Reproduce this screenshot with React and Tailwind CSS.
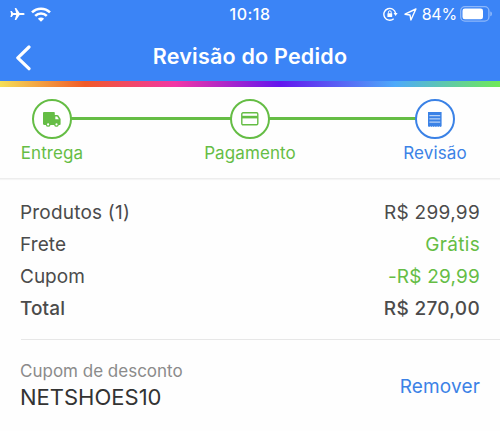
import React from "react";

const steps = [
  { label: "Entrega", icon: TruckIcon, tone: "text-[#65bd45]", width: "w-[62px]" },
  { label: "Pagamento", icon: CardIcon, tone: "text-[#65bd45]", width: "ml-[121px] w-[92px]" },
  { label: "Revisão", icon: ReceiptIcon, tone: "text-[#3b82e6]", width: "ml-[108px] w-[62px]" },
];

const rows = [
  { label: "Produtos (1)", value: "R$ 299,99", tone: "text-[#4b4b4b]", weight: "font-normal", ls: "tracking-[0.2px]", vs: "tracking-[0.3px]" },
  { label: "Frete", value: "Grátis", tone: "text-[#65bd45]", weight: "font-normal", ls: "tracking-[0.1px]", vs: "tracking-[0.3px]" },
  { label: "Cupom", value: "-R$ 29,99", tone: "text-[#65bd45]", weight: "font-normal", ls: "tracking-[0px]", vs: "tracking-[0.2px]" },
  { label: "Total", value: "R$ 270,00", tone: "text-[#4b4b4b]", weight: "font-medium", ls: "tracking-[0.1px]", vs: "tracking-[0.3px]" },
];

function PlaneIcon() {
  return (
    <svg className="block" width="15" height="14" viewBox="0 0 15 14" fill="white">
      <path d="M14.7 7c0 .6-.9 1.1-2 1.1H9.6L6.2 13H4.7l1.5-4.9H3.2l-1.5 2H.4l.7-3.1-.7-3.1h1.3l1.5 2h3L4.7 1h1.5l3.4 4.9h3.1c1.1 0 2 .5 2 1.1z" />
    </svg>
  );
}

function WifiIcon() {
  return (
    <svg className="block" width="20" height="15" viewBox="0 0 20 15" fill="none" stroke="white" strokeWidth="2.5">
      <path d="M1 5.4a12.7 12.7 0 0 1 18 0" />
      <path d="M4.2 8.9a8.1 8.1 0 0 1 11.6 0" />
      <path d="M10 14.8 6.9 11.8a4.4 4.4 0 0 1 6.2 0z" fill="white" stroke="none" />
    </svg>
  );
}

function LockIcon() {
  return (
    <svg className="block" width="15" height="14" viewBox="0 0 15 14" fill="none" stroke="white" strokeWidth="1.4">
      <path d="M10.7 11.7A5.9 5.9 0 1 1 12.6 6.4" />
      <path d="M10.6 6.1h4l-2 2.9z" fill="white" stroke="none" />
      <rect x="4.4" y="6.3" width="4.8" height="3.8" rx=".5" fill="white" stroke="none" />
      <path d="M5.4 6.6V5.2a1.4 1.4 0 0 1 2.8 0v1.4" strokeWidth="1" />
    </svg>
  );
}

function LocationIcon() {
  return (
    <svg className="block" width="13" height="13" viewBox="0 0 13 13" fill="none" stroke="white" strokeWidth="1.4" strokeLinejoin="round">
      <path d="M11.9 1 1 6.2l5 .8.9 5z" />
    </svg>
  );
}

function BatteryIcon() {
  return (
    <svg className="block" width="33" height="16" viewBox="0 0 33 16">
      <rect x=".7" y=".7" width="28.2" height="14.4" rx="4.2" fill="none" stroke="white" strokeOpacity=".42" strokeWidth="1.3" />
      <rect x="2.5" y="2.5" width="20.5" height="10.8" rx="2.3" fill="white" />
      <path d="M30.3 5.6c1 .3 1.6 1.2 1.6 2.3s-.6 2-1.6 2.3z" fill="white" fillOpacity=".45" />
    </svg>
  );
}

function TruckIcon() {
  return (
    <svg className="block" width="18" height="15" viewBox="0 0 18 15">
      <path fill="currentColor" d="M1.2 0h9.6c.6 0 1 .4 1 1v2h2.4c.5 0 .9.2 1.2.6l1.9 2.9c.2.2.3.5.3.8V12c0 .5-.3.9-.8.9h-1a2.4 2.4 0 0 1-4.7 0H7.5a2.4 2.4 0 0 1-4.7 0H1.2c-.7 0-1.2-.5-1.2-1.1V1.2C0 .5.5 0 1.2 0z" />
      <path fill="white" d="M12.3 4.4h1.8l1.8 2.9h-3.6z" />
      <circle cx="5.1" cy="12.4" r="1.1" fill="white" />
      <circle cx="13.5" cy="12.4" r="1.1" fill="white" />
    </svg>
  );
}

function CardIcon() {
  return (
    <svg className="block" width="18" height="14" viewBox="0 0 18 14">
      <rect x=".8" y=".8" width="16" height="12" rx="1.2" fill="none" stroke="currentColor" strokeWidth="1.4" />
      <path fill="currentColor" d="M1 3.8h15.8v2.6H1z" />
    </svg>
  );
}

function ReceiptIcon() {
  return (
    <svg className="block" width="14" height="15" viewBox="0 0 14 15">
      <path fill="currentColor" d="M0 0h13.6v14.2l-1.1.7-1.2-.7-1.1.7-1.1-.7-1.2.7-1.1-.7-1.1.7-1.2-.7-1.1.7-1.1-.7-1.2.7-1.1-.7z" />
      <path stroke="white" strokeOpacity=".8" strokeWidth="1" d="M1.4 3.7h10.8M1.4 6.9h10.8M1.4 10.1h10.8" />
    </svg>
  );
}

function Step({ label, icon: Icon, tone, width }) {
  return (
    <div className={`flex flex-col items-center ${width} ${tone}`}>
      <div className="flex size-10 items-center justify-center rounded-full border-2 border-current bg-white">
        <Icon />
      </div>
      <span className="mt-[2px] text-[17px] leading-6 tracking-[0.1px] whitespace-nowrap">{label}</span>
    </div>
  );
}

export default function App() {
  return (
    <div className="h-[431px] w-[500px] overflow-hidden bg-[#fefefe] font-['Inter','Liberation_Sans',sans-serif]">
      <header className="h-[81px] bg-[#3b84f6] text-white">
        <div className="grid h-7 grid-cols-[1fr_60px_1fr] items-center pr-[7px] pl-[10px]">
          <div className="flex items-center gap-[6px]">
            <PlaneIcon />
            <WifiIcon />
          </div>
          <span className="mr-[3px] text-center text-[16px] font-medium tracking-[0.5px] whitespace-nowrap">10:18</span>
          <div className="flex items-center justify-end">
            <LockIcon />
            <span className="ml-[6px]"><LocationIcon /></span>
            <span className="ml-[5px] text-[16px] tracking-[-0.2px]">84%</span>
            <span className="ml-[3px]"><BatteryIcon /></span>
          </div>
        </div>
        <div className="grid h-[58px] grid-cols-[40px_1fr_40px] items-center">
          <svg className="ml-[14px] block" width="17" height="27" viewBox="0 0 17 27" fill="none" stroke="white" strokeWidth="3.2" strokeLinecap="round" strokeLinejoin="round">
            <path d="M15 3 3.8 13.8 15 24.7" />
          </svg>
          <h1 className="mb-[2px] text-center text-[21.5px] leading-7 font-semibold tracking-[0.22px]">Revisão do Pedido</h1>
        </div>
      </header>
      <div className="h-[6px] bg-[linear-gradient(90deg,#f5df58_0%,#f05a28_17%,#f236a5_35%,#6415ee_56%,#4eaafa_79%,#70e957_100%)]" />

      <section className="relative h-[92px] border-b border-[#ededed] pl-[21px] pt-3 shadow-[0_1px_1px_#f5f5f5]">
        <div className="absolute top-[30px] right-[65px] left-[52px] h-[3px] bg-[#65bd45]" />
        <div className="relative flex">
          {steps.map((step) => <Step key={step.label} {...step} />)}
        </div>
      </section>

      <section className="ml-[21px] border-b border-[#e7e7e7] pt-[18px] pr-[20px] pb-[14px]">
        {rows.map((row) => (
          <div key={row.label} className={`-ml-px flex h-8 items-center justify-between text-[19px] ${row.weight}`}>
            <span className={`text-[#4b4b4b] ${row.ls}`}>{row.label}</span>
            <span className={`${row.tone} ${row.vs}`}>{row.value}</span>
          </div>
        ))}
      </section>

      <section className="flex items-center justify-between pt-[19px] pr-[20px] pl-[20px]">
        <div className="flex flex-col">
          <span className="text-[17px] leading-6 text-[#8b8b8b]">Cupom de desconto</span>
          <span className="-mt-px text-[22px] leading-[30px] text-[#333333]">NETSHOES10</span>
        </div>
        <button className="mt-[2px] text-[19px] leading-7 tracking-[0.15px] text-[#3b82e6]">Remover</button>
      </section>
    </div>
  );
}
